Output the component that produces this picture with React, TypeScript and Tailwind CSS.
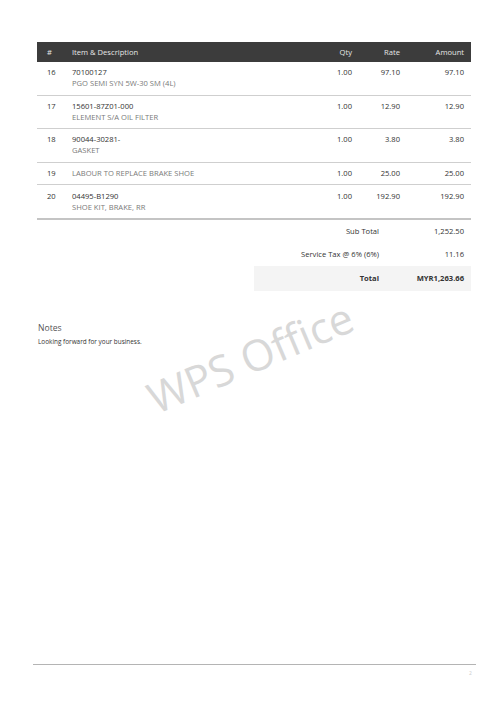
import React from "react";

const rows = [
  { n: "16", code: "70100127", desc: "PGO SEMI SYN 5W-30 SM (4L)", qty: "1.00", rate: "97.10", amt: "97.10" },
  { n: "17", code: "15601-87Z01-000", desc: "ELEMENT S/A OIL FILTER", qty: "1.00", rate: "12.90", amt: "12.90" },
  { n: "18", code: "90044-30281-", desc: "GASKET", qty: "1.00", rate: "3.80", amt: "3.80" },
  { n: "19", code: "", desc: "LABOUR TO REPLACE BRAKE SHOE", qty: "1.00", rate: "25.00", amt: "25.00" },
  { n: "20", code: "04495-B1290", desc: "SHOE KIT, BRAKE, RR", qty: "1.00", rate: "192.90", amt: "192.90" },
];

export default function App() {
  return (
    <div
      className="relative w-[500px] h-[707px] bg-white overflow-hidden text-[#333]"
      style={{ fontFamily: '"Open Sans", "Liberation Sans", sans-serif' }}
    >
      <div className="pt-[42px] pl-[37px] w-[471px]">
        {/* header */}
        <div className="grid grid-cols-[35px_240px_40px_48px_71px] h-[20px] items-center bg-[#3c3c3c] text-[#e6e6e6] text-[7.6px] leading-[11px]">
          <div className="pl-[10px]">#</div>
          <div>Item &amp; Description</div>
          <div className="text-right">Qty</div>
          <div className="text-right">Rate</div>
          <div className="text-right pr-[7px]">Amount</div>
        </div>
        {rows.map((r, i) => (
          <div
            key={r.n}
            className={
              "grid grid-cols-[35px_240px_40px_48px_71px] text-[7.6px] leading-[11px] py-[5.3px] " +
              (i === rows.length - 1 ? "border-b-2 border-[#c4c4c4]" : "border-b border-[#cfcfcf]")
            }
          >
            <div className="pl-[10px] text-[#333]">{r.n}</div>
            <div>
              {r.code && <div className="text-[#333]">{r.code}</div>}
              <div className="text-[#7a7a7a]">{r.desc}</div>
            </div>
            <div className="text-right text-[#333]">{r.qty}</div>
            <div className="text-right text-[#333]">{r.rate}</div>
            <div className="text-right pr-[7px] text-[#333]">{r.amt}</div>
          </div>
        ))}
        {/* totals */}
        <div className="flex justify-end text-[7.6px] leading-[11px] text-[#333]">
          <div className="w-[217px]">
            <div className="grid grid-cols-[125px_92px] h-[23px] items-center">
              <div className="text-right">Sub Total</div>
              <div className="text-right pr-[7px]">1,252.50</div>
            </div>
            <div className="grid grid-cols-[125px_92px] h-[23px] items-center">
              <div className="text-right">Service Tax @ 6% (6%)</div>
              <div className="text-right pr-[7px]">11.16</div>
            </div>
            <div className="grid grid-cols-[125px_92px] h-[25px] items-center bg-[#f4f4f4] font-bold">
              <div className="text-right">Total</div>
              <div className="text-right pr-[7px]">MYR1,263.66</div>
            </div>
          </div>
        </div>
      </div>

      {/* notes */}
      <div className="pl-[38px] mt-[31px]">
        <div className="text-[8.6px] leading-[12px] text-[#555]">Notes</div>
        <div className="text-[6.4px] leading-[10px] mt-[3px] text-[#333]">Looking forward for your business.</div>
      </div>

      {/* watermark */}
      <div
        className="absolute left-[250px] top-[357px] text-[43px] leading-none text-[#d8d8d8] whitespace-nowrap pointer-events-none"
        style={{ transform: "translate(-50%, -50%) rotate(-23deg)" }}
      >
        WPS Office
      </div>

      {/* footer */}
      <div className="absolute left-[33px] top-[664px] w-[443px] border-t-[1.5px] border-[#b4b4b4]" />
      <div className="absolute left-[469px] top-[671px] text-[5px] leading-none text-[#ccc]">2</div>
    </div>
  );
}
